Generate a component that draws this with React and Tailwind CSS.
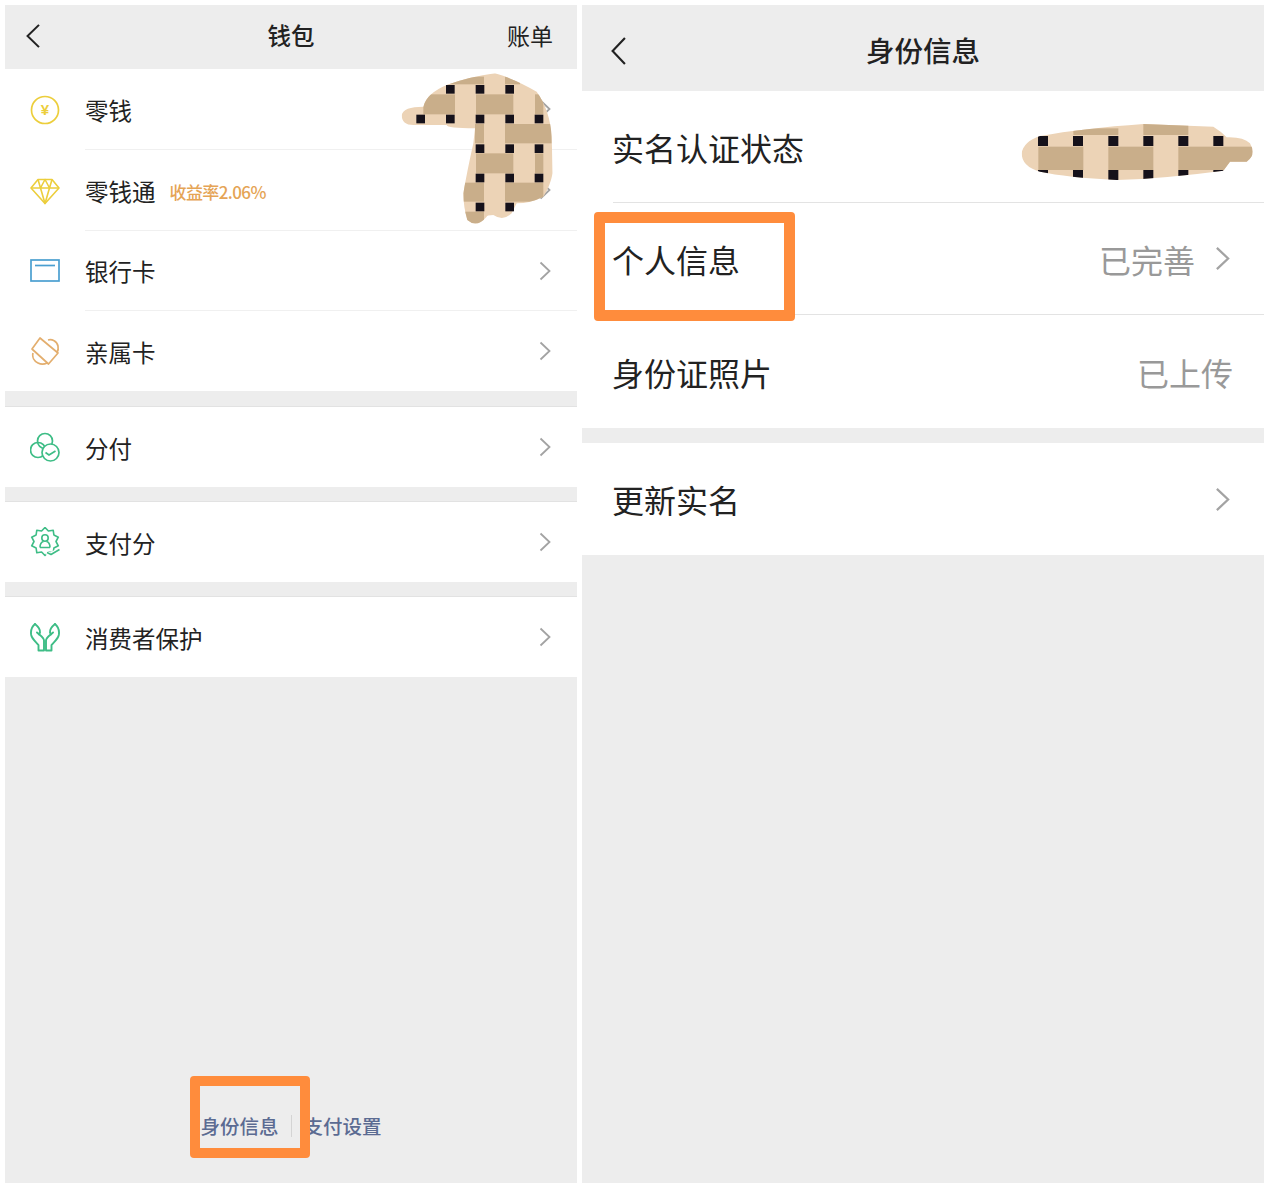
import React from 'react';

const Chevron = ({ className }) => (
    <svg viewBox="0 0 12 20" fill="none" stroke="#a3a3a3" strokeWidth="1.8" className={className}>
        <path d="M1.5 1.5L10.5 10L1.5 18.5" />
    </svg>
);

const BackArrow = ({ className }) => (
    <svg viewBox="0 0 14 26" fill="none" stroke="#222222" strokeWidth="2" preserveAspectRatio="none" className={className}>
        <path d="M13 1L1.5 13L13 25" />
    </svg>
);

const CoinIcon = () => (
    <svg viewBox="0 0 30 30" className="w-[30px] h-[30px]" fill="none" stroke="#ecce3c" strokeWidth="1.7">
        <circle cx="15" cy="15" r="13.5" />
        <text x="15" y="20" textAnchor="middle" fontSize="15" fontWeight="700" fill="#ecce3c" stroke="none" fontFamily="Liberation Sans, sans-serif">¥</text>
    </svg>
);

const DiamondIcon = () => (
    <svg viewBox="0 0 30 30" className="w-[30px] h-[30px]" fill="none" stroke="#ecce3c" strokeWidth="1.6" strokeLinejoin="round">
        <path d="M8 3.5H22L29 12L15 27.5L1 12Z" />
        <path d="M1 12H29M8 3.5L10.5 12L15 27.5L19.5 12L22 3.5M10.5 12L15 3.5L19.5 12" />
    </svg>
);

const CardIcon = () => (
    <svg viewBox="0 0 30 30" className="w-[30px] h-[30px]" fill="none" stroke="#4a9fd0" strokeWidth="1.7">
        <rect x="1" y="4" width="28" height="21" />
        <path d="M5 9.5H25" />
    </svg>
);

const FamilyCardIcon = () => (
    <svg viewBox="0 0 30 30" className="w-[30px] h-[30px]" fill="none" stroke="#e3ae6e" strokeWidth="1.7" strokeLinejoin="round">
        <path d="M10 2L28 17L18.5 28L2 13Z" />
        <path d="M18 4C22 3 27 5 28 10C28.5 12.5 28 15 27 16.5" />
        <path d="M3 17C2 21 4 25 8 27C11 28.5 15 28 17 27" />
    </svg>
);

const SplitPayIcon = () => (
    <svg viewBox="0 0 30 30" className="w-[30px] h-[30px]" fill="none" stroke="#3ebd86" strokeWidth="1.7">
        <circle cx="15" cy="9" r="7.5" />
        <circle cx="8" cy="18" r="7.5" />
        <circle cx="20.5" cy="20.5" r="8.5" fill="white" />
        <path d="M15.5 20.5L19 23L25.5 19" />
    </svg>
);

// ten pointed badge outline for 支付分
const badgePoints = Array.from({ length: 20 }, (_, i) => {
    const r = i % 2 === 0 ? 14 : 11;
    const a = (i * Math.PI) / 10 - Math.PI / 2;
    return `${(15 + r * Math.cos(a)).toFixed(1)},${(14.5 + r * Math.sin(a)).toFixed(1)}`;
}).join(' ');

const PayScoreIcon = () => (
    <svg viewBox="0 0 30 30" className="w-[30px] h-[30px]" fill="none" stroke="#3ebd86" strokeWidth="1.6" strokeLinejoin="round">
        <polygon points={badgePoints} />
        <circle cx="15" cy="11" r="3.2" />
        <path d="M10 20.5C10 17 11.5 15 13.5 14.5M20 20.5C20 17 18.500 15 16.500 14.5M10 20.500H20" />
        <path d="M16 25.500L21 27.500L30 22" stroke="white" strokeWidth="4" />
        <path d="M17 25.500L21 27.500L29.500 22.500" />
    </svg>
);

const ProtectIcon = () => (
    <svg viewBox="0 0 30 30" className="w-[30px] h-[30px]" fill="none" stroke="#3ebd86" strokeWidth="1.9" strokeLinejoin="round" strokeLinecap="round">
        <path d="M5 2C1.500 5 0.500 9 1.200 13C2 17 6 20 8.500 23V28.500H14V18.500C14 15.500 11 14 7 10.500" />
        <path d="M5 2C8 4.500 10.500 7 10 10.500L9 12.500" />
        <path d="M25 2C28.500 5 29.500 9 28.800 13C28 17 24 20 21.500 23V28.500H16V18.500C16 15.500 19 14 23 10.500" />
        <path d="M25 2C22 4.500 19.500 7 20 10.500L21 12.500" />
    </svg>
);

const tall = [
    [200, 50, 112, 23], [375, 50, 45, 23],
    [130, 103, 95, 60], [288, 103, 112, 60], [465, 103, 25, 60],
    [285, 192, 27, 58], [375, 192, 140, 58],
    [288, 280, 112, 60], [465, 280, 25, 60],
    [250, 368, 62, 57], [375, 368, 115, 57],
    [255, 455, 57, 45],
];
const tallDots = [
    [211, 88], [300, 88], [389, 88], [122, 177], [211, 177], [300, 177], [389, 177], [477, 177],
    [300, 266], [389, 266], [477, 266], [300, 354], [389, 354], [477, 354], [300, 441], [389, 441],
];

// painted-over area next to 零钱 / 零钱通
const MaskTall = () => (
    <svg viewBox="0 0 660 540" className="absolute left-[380px] top-[60px] w-[220px] h-[180px]">
        <clipPath id="mask-tall">
            <path d="M65 165Q70 140 130 140Q140 100 200 75Q270 50 345 40Q400 55 470 95Q510 150 515 230L518 340Q510 380 490 410Q450 430 410 430L395 460Q370 485 340 465Q320 465 320 470Q290 505 262 480Q250 440 250 400Q262 330 280 250L285 205Q200 205 200 195L100 195Q65 195 65 165Z" />
        </clipPath>
        <g clipPath="url(#mask-tall)">
            <rect width="660" height="540" fill="#ecd3b6" />
            {tall.map(([x, y, w, h]) => <rect key={`${x}-${y}`} x={x} y={y} width={w} height={h} fill="#c9ae8a" />)}
        </g>
        {tallDots.map(([x, y]) => <rect key={`${x}-${y}`} x={x - 13} y={y - 13} width="26" height="26" fill="#15111a" />)}
    </svg>
);

const wide = [
    [220, 85, 135, 20], [430, 70, 135, 35],
    [115, 140, 135, 70], [325, 140, 135, 70], [535, 140, 225, 70],
];
const wideDots = [
    [129, 123], [234, 123], [340, 123], [445, 123], [550, 123], [655, 123],
    [129, 225], [234, 225], [340, 225], [445, 225], [550, 225], [655, 225],
];

// painted-over area next to 实名认证状态
const MaskWide = () => (
    <svg viewBox="0 0 807 300" className="absolute left-[1000px] top-[100px] w-[269px] h-[100px]">
        <clipPath id="mask-wide">
            <path d="M65 160Q70 125 120 108Q250 85 430 72L640 80Q665 95 680 112Q730 110 750 130Q770 165 740 185L690 185L670 212Q500 235 350 240Q200 232 120 215Q65 200 65 160Z" />
        </clipPath>
        <g clipPath="url(#mask-wide)">
            <rect width="807" height="300" fill="#ecd3b6" />
            {wide.map(([x, y, w, h]) => <rect key={`${x}-${y}`} x={x} y={y} width={w} height={h} fill="#c9ae8a" />)}
            {wideDots.map(([x, y]) => <rect key={`${x}-${y}`} x={x - 15} y={y - 15} width="30" height="30" fill="#15111a" />)}
        </g>
    </svg>
);

const WalletRow = ({ icon, label, tag, height, divider }) => (
    <div className={`flex bg-white ${height}`}>
        <div className="w-[80px] pl-[25px] flex items-center">{icon}</div>
        <div className={`flex-1 flex items-center pr-[26px] ${divider ? 'border-b border-[#f0f0f0]' : ''}`}>
            <span className="mt-[3px] text-[23.5px] leading-none text-[#222222]">{label}</span>
            {tag && <span className="mt-[3px] ml-[14px] text-[17px] leading-none font-medium tracking-[-0.6px] text-[#e5a455]">{tag}</span>}
            <Chevron className="ml-auto w-[12px] h-[20px]" />
        </div>
    </div>
);

const Gap = ({ height }) => <div className={`${height} bg-[#ededed] border-b border-[#e2e2e2]`} />;

const WalletPanel = () => (
    <div className="w-[572px] h-full flex flex-col bg-[#ededed]">
        <div className="relative h-[64px] flex items-center justify-between pb-[3px] pl-[21px] pr-[24px] shrink-0">
            <BackArrow className="w-[14px] h-[24px]" />
            <span className="absolute left-0 right-0 text-center text-[23.5px] leading-none font-medium text-[#222222]">钱包</span>
            <span className="text-[23px] leading-none text-[#222222]">账单</span>
        </div>
        <WalletRow icon={<CoinIcon />} label="零钱" height="h-[81px]" divider />
        <WalletRow icon={<DiamondIcon />} label="零钱通" tag="收益率2.06%" height="h-[81px]" divider />
        <WalletRow icon={<CardIcon />} label="银行卡" height="h-[80px]" divider />
        <WalletRow icon={<FamilyCardIcon />} label="亲属卡" height="h-[80px]" />
        <Gap height="h-[16px]" />
        <WalletRow icon={<SplitPayIcon />} label="分付" height="h-[80px]" />
        <Gap height="h-[15px]" />
        <WalletRow icon={<PayScoreIcon />} label="支付分" height="h-[80px]" />
        <Gap height="h-[15px]" />
        <WalletRow icon={<ProtectIcon />} label="消费者保护" height="h-[80px]" />
        <div className="flex-1 flex items-end justify-center pb-[46px]">
            <div className="flex items-center text-[19.5px] leading-none font-medium text-[#5b6b92]">
                <span>身份信息</span>
                <span className="mx-[12px] w-px h-[22px] bg-[#d4d4d4]" />
                <span>支付设置</span>
            </div>
        </div>
    </div>
);

const InfoRow = ({ label, value, arrow, divider, height = 'h-[112px]' }) => (
    <div className={`${height} flex items-center bg-white pl-[31px]`}>
        <div className={`flex-1 h-full flex items-center ${arrow ? 'pr-[34px]' : 'pr-[31px]'} ${divider ? 'border-b border-[#e3e3e3]' : ''}`}>
            <span className="-ml-px text-[32px] leading-none text-[#222222]">{label}</span>
            <span className="ml-auto text-[32px] leading-none text-[#999999]">{value}</span>
            {arrow && <Chevron className="ml-[20px] w-[15px] h-[25px]" />}
        </div>
    </div>
);

const IdentityPanel = () => (
    <div className="w-[682px] h-full flex flex-col bg-[#ededed]">
        <div className="relative h-[86px] flex items-center justify-center pt-[4px] shrink-0">
            <BackArrow className="absolute left-[29px] top-[32px] w-[15px] h-[28px]" />
            <span className="text-[28.5px] leading-none font-medium text-[#222222]">身份信息</span>
        </div>
        <InfoRow label="实名认证状态" divider />
        <InfoRow label="个人信息" value="已完善" arrow divider />
        <InfoRow label="身份证照片" value="已上传" height="h-[113px]" />
        <div className="h-[15px] bg-[#ededed]" />
        <InfoRow label="更新实名" arrow />
        <div className="flex-1" />
    </div>
);

export default function App() {
    return (
        <div className="relative w-[1269px] h-[1188px] overflow-hidden bg-white p-[5px] flex gap-[5px] font-['Noto_Sans_CJK_SC','Noto_Sans',sans-serif]">
            <WalletPanel />
            <IdentityPanel />
            <MaskTall />
            <MaskWide />
            <div className="absolute left-[190px] top-[1076px] w-[120px] h-[82px] border-[10px] border-[#ff8c3c] rounded-[4px]" />
            <div className="absolute left-[594px] top-[212px] w-[201px] h-[109px] border-[11px] border-[#ff8c3c] rounded-[4px]" />
        </div>
    );
}
